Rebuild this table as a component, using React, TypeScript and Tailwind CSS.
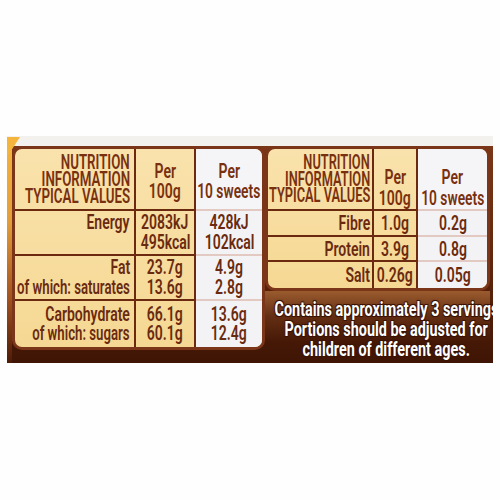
import type { ReactNode } from 'react'

const ink = 'text-[#6a2a10]'

function T({ children, className = '' }: { children: ReactNode; className?: string }) {
  return <span className={`inline-block whitespace-nowrap ${className}`}>{children}</span>
}

// the pack uses a very condensed face, so the text is squeezed horizontally
function R({ children }: { children: ReactNode }) {
  const sub = typeof children === 'string' && children.startsWith('of which')
  return <T className={sub ? 'origin-right scale-x-[0.66]' : 'origin-right scale-x-[0.7]'}>{children}</T>
}
function H({ children, right }: { children: ReactNode; right?: boolean }) {
  return <T className={right ? 'origin-right scale-x-[0.64]' : 'origin-right scale-x-[0.665]'}>{children}</T>
}
function C({ children }: { children: ReactNode }) {
  return <T className="origin-center scale-x-[0.7]">{children}</T>
}
function W({ children }: { children: ReactNode }) {
  return <T className="origin-center scale-x-[0.69]">{children}</T>
}

function LeftTable() {
  const rows = [
    { h: 'h-[45px]', label: ['Energy', ''], a: ['2083kJ', '495kcal'], b: ['428kJ', '102kcal'] },
    { h: 'h-[45px]', label: ['Fat', 'of which: saturates'], a: ['23.7g', '13.6g'], b: ['4.9g', '2.8g'] },
    { h: 'flex-1', label: ['Carbohydrate', 'of which: sugars'], a: ['66.1g', '60.1g'], b: ['13.6g', '12.4g'] },
  ]
  return (
    <div className="flex h-[204px] w-[253px] shrink-0 flex-col overflow-hidden rounded-[10px] border-[3px] border-[#7b3518] bg-[linear-gradient(180deg,#f9e2ac_0%,#f5d893_100%)]">
      <div className="flex h-[62px] shrink-0">
        <div className="flex w-[121px] shrink-0 flex-col items-end justify-center border-r-2 border-b-2 border-[#6b2a10] pr-[4px] leading-[17px] text-[#78300f]">
          <H>NUTRITION</H>
          <H>INFORMATION</H>
          <H>TYPICAL VALUES</H>
        </div>
        <div className="flex w-[60px] shrink-0 flex-col items-center justify-center border-r-2 border-b-2 border-[#6b2a10] pt-[4px] leading-[20px] text-[#78300f]">
          <C>Per</C>
          <C>100g</C>
        </div>
        <div className="flex min-w-0 flex-1 flex-col items-center justify-center border-b-2 border-[#e2c9c2] bg-[#f5f5f7] pt-[4px] leading-[20px] text-[#78300f]">
          <C>Per</C>
          <W>10 sweets</W>
        </div>
      </div>
      {rows.map((r, i) => (
        <div key={i} className={`flex ${r.h} leading-[19.5px] ${ink}`}>
          <div className={`flex w-[121px] shrink-0 flex-col items-end justify-center border-r-2 border-[#6b2a10] pr-[4px] ${i < 2 ? 'border-b-2' : ''}`}>
            {r.label.map((t, j) => (t ? <R key={j}>{t}</R> : <span key={j} className="h-[19.5px]" />))}
          </div>
          <div className={`flex w-[60px] shrink-0 flex-col items-center justify-center border-r-2 border-[#6b2a10] ${i < 2 ? 'border-b-2' : ''}`}>
            {r.a.map((t, j) => (
              <C key={j}>{t}</C>
            ))}
          </div>
          <div className={`flex min-w-0 flex-1 flex-col items-center justify-center border-[#e2c9c2] bg-[#f3f3f5] ${i < 2 ? 'border-b-2' : ''}`}>
            {r.b.map((t, j) => (
              <C key={j}>{t}</C>
            ))}
          </div>
        </div>
      ))}
    </div>
  )
}

function RightTable() {
  const rows = [
    { h: 'h-[26px]', l: 'Fibre', a: '1.0g', b: '0.2g' },
    { h: 'h-[25px]', l: 'Protein', a: '3.9g', b: '0.8g' },
    { h: 'flex-1', l: 'Salt', a: '0.26g', b: '0.05g' },
  ]
  return (
    <div className="flex h-[145px] w-[225px] shrink-0 flex-col overflow-hidden rounded-[10px] border-[3px] border-[#7b3518] bg-[linear-gradient(180deg,#f9e2ac_0%,#f5d893_100%)]">
      <div className="flex h-[62px] shrink-0">
        <div className="flex w-[106px] shrink-0 flex-col items-end justify-center border-r-2 border-b-2 border-[#6b2a10] pr-[2px] leading-[16.5px] text-[#78300f]">
          <H right>NUTRITION</H>
          <H right>INFORMATION</H>
          <H right>TYPICAL VALUES</H>
        </div>
        <div className="flex w-[44px] shrink-0 flex-col items-center justify-center border-r-2 border-b-2 border-[#6b2a10] pt-[17px] leading-[21px] text-[#78300f]">
          <C>Per</C>
          <C>100g</C>
        </div>
        <div className="flex min-w-0 flex-1 flex-col items-center justify-center border-b-2 border-[#e2c9c2] bg-[#f5f5f7] pt-[17px] leading-[21px] text-[#78300f]">
          <C>Per</C>
          <W>10 sweets</W>
        </div>
      </div>
      {rows.map((r, i) => (
        <div key={r.l} className={`flex ${r.h} leading-[20px] ${ink}`}>
          <div className={`flex w-[106px] shrink-0 items-center justify-end border-r-2 border-[#6b2a10] pr-[2px] ${i < 2 ? 'border-b-2' : ''}`}>
            <R>{r.l}</R>
          </div>
          <div className={`flex w-[44px] shrink-0 items-center justify-center border-r-2 border-[#6b2a10] ${i < 2 ? 'border-b-2' : ''}`}>
            <C>{r.a}</C>
          </div>
          <div className={`flex min-w-0 flex-1 items-center justify-center border-[#e2c9c2] bg-[#f3f3f5] ${i < 2 ? 'border-b-2' : ''}`}>
            <C>{r.b}</C>
          </div>
        </div>
      ))}
    </div>
  )
}

export default function App() {
  return (
    <div className="h-[500px] w-[500px] overflow-hidden bg-[#fefefe] pt-[136px] pl-[7px] font-['Roboto','Liberation_Sans',sans-serif] text-[20px] font-semibold">
      <div className="relative w-[486px]">
        <div className="h-[10px] bg-[#f3f1ee]" />
        <svg className="absolute top-[1px] left-0" width="14" height="22" viewBox="0 0 14 22">
          <path d="M0 0 L13 0 L0 20 Z" fill="#f5b43c" />
        </svg>
        <div className="flex h-[217px] overflow-hidden bg-[linear-gradient(180deg,#7a3617_0%,#5e250c_55%,#3f1505_100%)]">
          <div className="w-[5px] shrink-0 bg-[linear-gradient(180deg,#f3b23e_0%,#e49c38_35%,#a4521f_70%,#4e1b07_100%)]" />
          <LeftTable />
          <div className="flex w-[225px] shrink-0 flex-col">
            <RightTable />
            <div className="flex min-h-0 flex-1 flex-col items-center bg-[linear-gradient(180deg,rgba(176,110,58,0.75)_0%,rgba(140,80,40,0.35)_35%,transparent_70%)] pt-[8px] pl-[17px] font-bold leading-[20px] text-white [text-shadow:1px_1px_0_#3a1204,-1px_-1px_0_#3a1204,1px_-1px_0_#3a1204,-1px_1px_0_#3a1204,0_0_3px_#3a1204]">
              <T className="origin-center scale-x-[0.72]">Contains approximately 3 servings</T>
              <T className="origin-center scale-x-[0.72]">Portions should be adjusted for</T>
              <T className="origin-center scale-x-[0.72]">children of different ages.</T>
            </div>
          </div>
        </div>
      </div>
    </div>
  )
}
